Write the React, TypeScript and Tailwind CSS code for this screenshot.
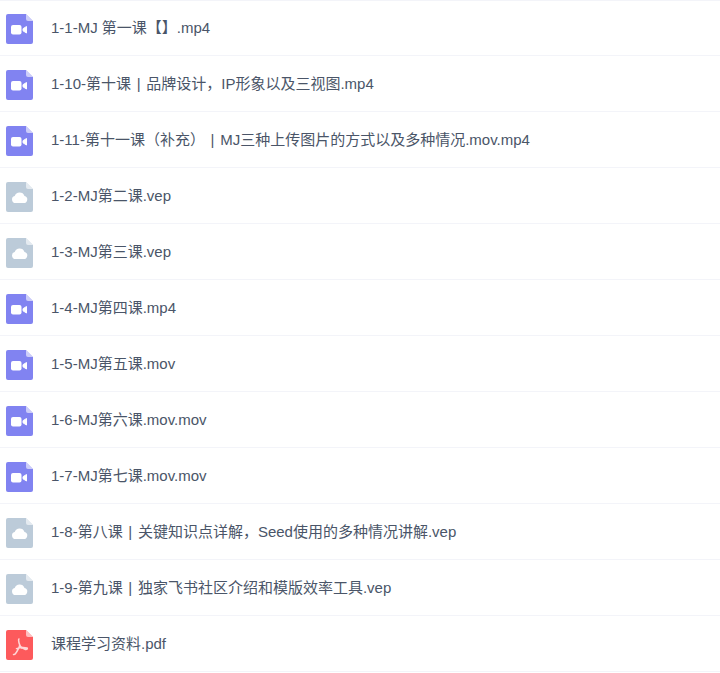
import React from 'react';

type Kind = 'video' | 'cloud' | 'pdf';

const files: { name: string; kind: Kind }[] = [
    { name: '1-1-MJ 第一课【】.mp4', kind: 'video' },
    { name: '1-10-第十课 | 品牌设计，IP形象以及三视图.mp4', kind: 'video' },
    { name: '1-11-第十一课（补充） | MJ三种上传图片的方式以及多种情况.mov.mp4', kind: 'video' },
    { name: '1-2-MJ第二课.vep', kind: 'cloud' },
    { name: '1-3-MJ第三课.vep', kind: 'cloud' },
    { name: '1-4-MJ第四课.mp4', kind: 'video' },
    { name: '1-5-MJ第五课.mov', kind: 'video' },
    { name: '1-6-MJ第六课.mov.mov', kind: 'video' },
    { name: '1-7-MJ第七课.mov.mov', kind: 'video' },
    { name: '1-8-第八课 | 关键知识点详解，Seed使用的多种情况讲解.vep', kind: 'cloud' },
    { name: '1-9-第九课 | 独家飞书社区介绍和模版效率工具.vep', kind: 'cloud' },
    { name: '课程学习资料.pdf', kind: 'pdf' },
];

const colors: Record<Kind, string> = { video: '#8183f1', cloud: '#bccbd9', pdf: '#fd5a5c' };

const FileIcon = ({ kind }: { kind: Kind }) => (
    <svg width="27" height="30" viewBox="0 0 27 30" className="shrink-0 mt-[3px]">
        <path d="M2 0H20L27 7V28a2 2 0 0 1-2 2H2a2 2 0 0 1-2-2V2a2 2 0 0 1 2-2Z" fill={colors[kind]} />
        <path d="M20 0L27 7H22a2 2 0 0 1-2-2Z" fill="#fff" fillOpacity="0.6" />
        {kind === 'video' && (
            <>
                <rect x="5" y="11" width="10.500" height="9.500" rx="2" fill="#fff" />
                <path d="M17 14.700L20.500 12.500V19L17 16.800Z" fill="#fff" stroke="#fff" strokeLinejoin="round" />
            </>
        )}
        {kind === 'cloud' && (
            <path
                d="M9.500 21a3.500 3.500 0 0 1-.8-6.900 5.200 5.200 0 0 1 9.800-.2A3.600 3.600 0 0 1 17.500 21Z"
                fill="#fff"
            />
        )}
        {kind === 'pdf' && (
            <path
                d="M13 9c-.6 0-.6 2.600.6 5.600 1 2.600 2.200 3.600 2.200 3.600M7.500 24.500c1.400.8 3.800-3.400 5.200-6.400 1-2 1-3.500 1-3.500M10.500 18.600c3-1 8-1.400 10.500-.6 1 .6-.2 1.800-2 1.200-1.400-.5-3.200-1.800-3.200-1.800"
                fill="none"
                stroke="#fff"
                strokeOpacity="0.75"
                strokeWidth="1.5"
                strokeLinecap="round"
            />
        )}
    </svg>
);

const App: React.FC = () => {
    return (
        <div className="w-[720px] h-[673px] overflow-hidden bg-white shadow-[inset_0_1px_0_#f3f4f9] font-['Liberation_Sans','Noto_Sans_CJK_SC',sans-serif] text-[15px] text-[#4a5568]">
            {files.map((file) => (
                <div key={file.name} className="h-14 pl-1.5 pr-4 flex items-center border-b border-[#f3f4f9]">
                    <FileIcon kind={file.kind} />
                    <span className={file.name.includes(' | ') ? 'ml-[18px] whitespace-nowrap mt-px [word-spacing:1.5px]' : 'ml-[18px] whitespace-nowrap mt-px'}>
                        {file.name}
                    </span>
                </div>
            ))}
        </div>
    );
};

export default App;
